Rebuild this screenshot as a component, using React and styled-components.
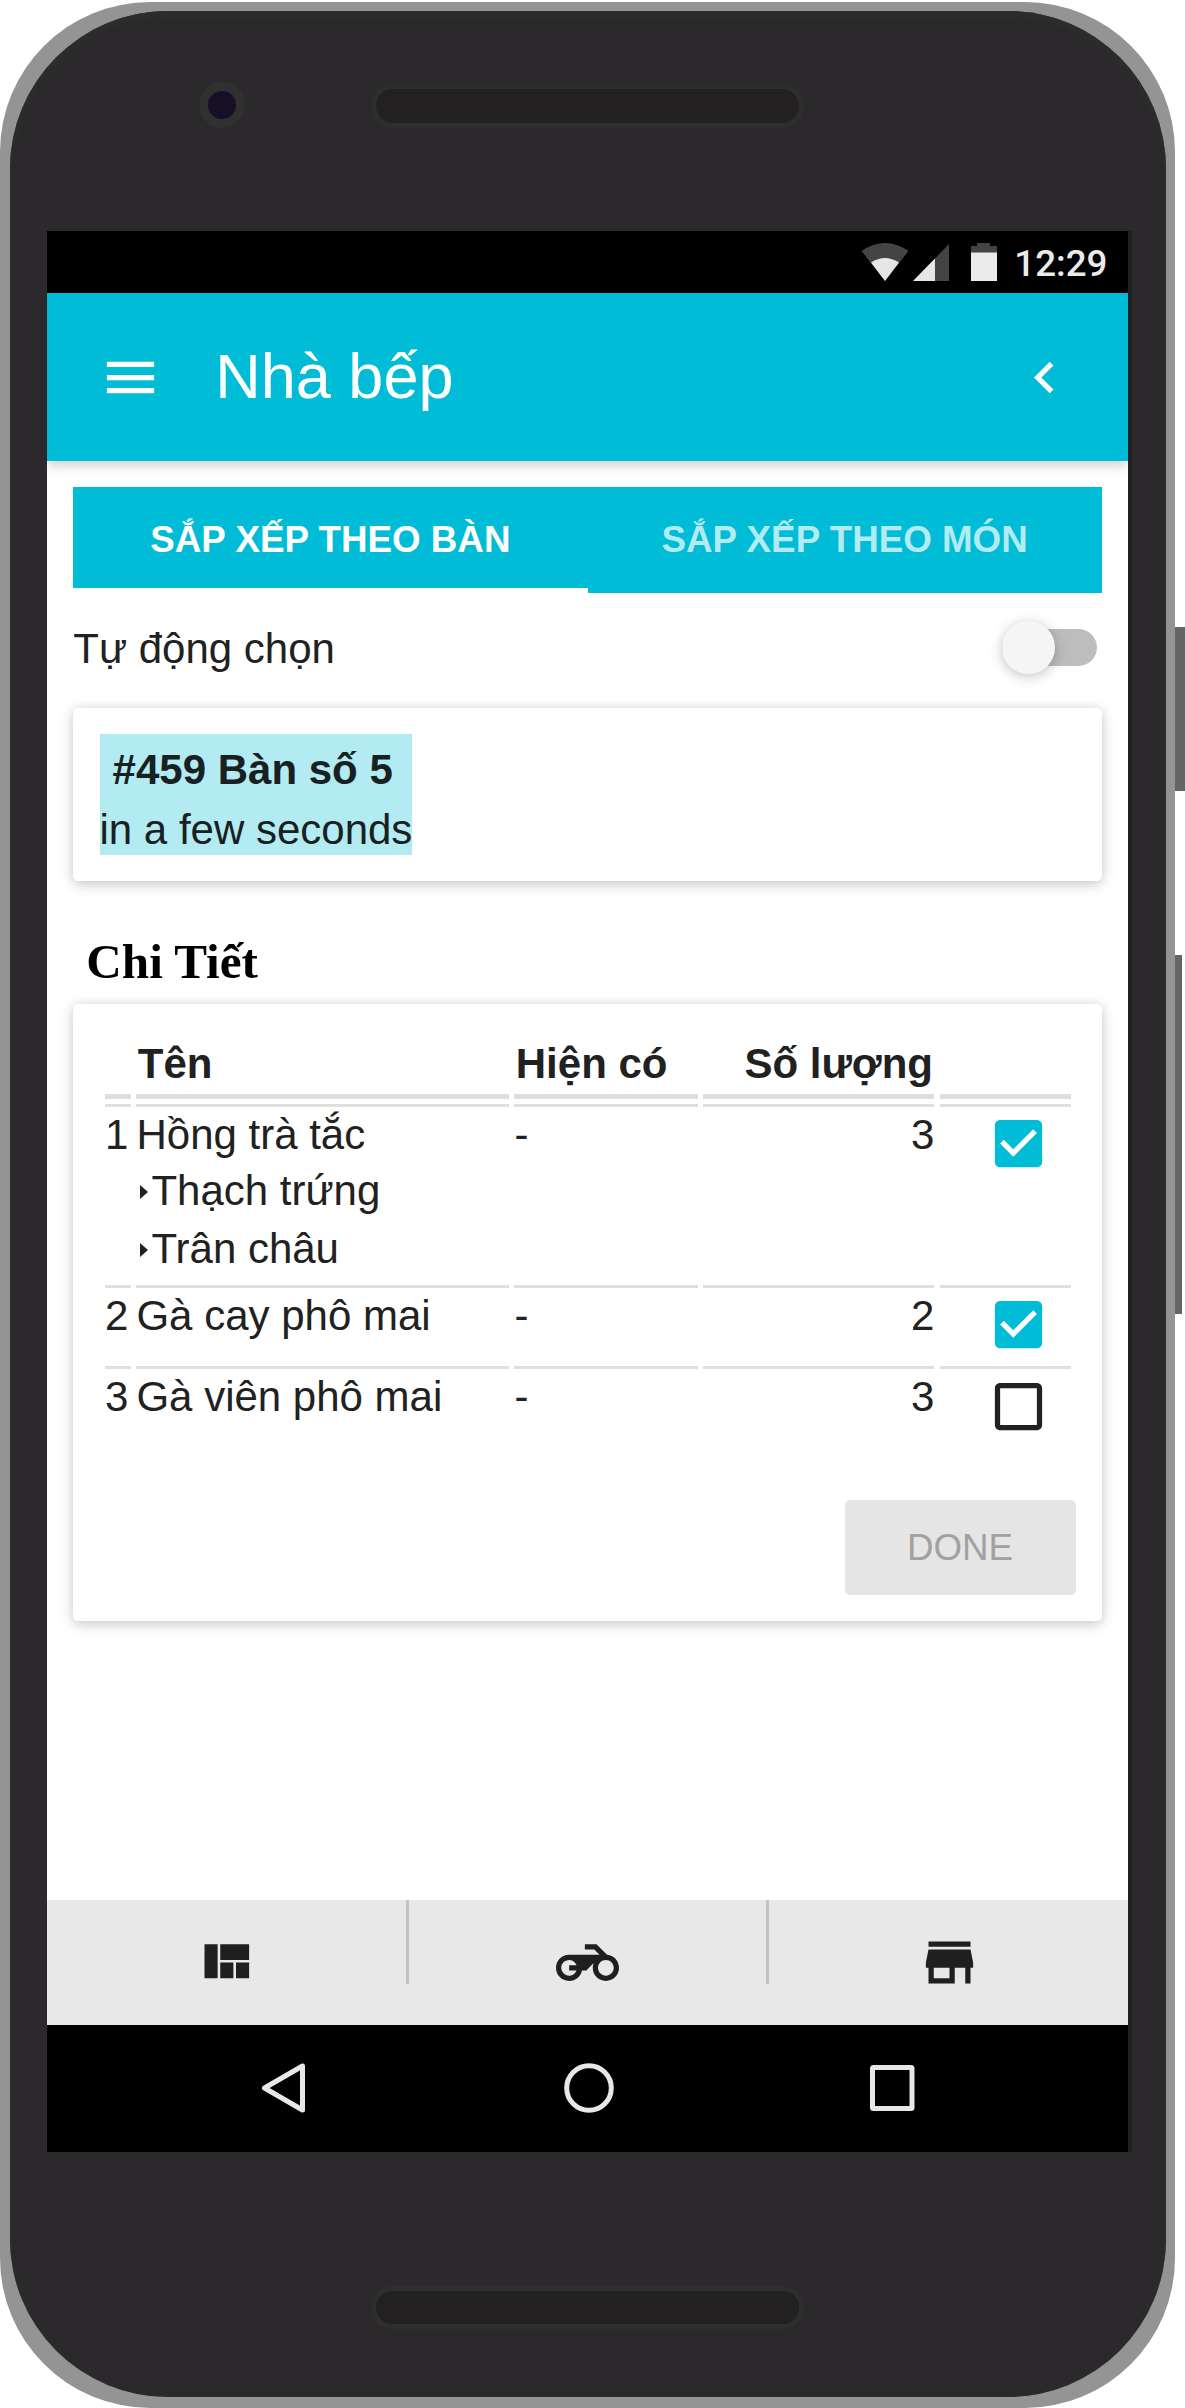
import React from "react";
import styled, { createGlobalStyle } from "styled-components";

const cyan = "#00bcd7";
const ink = "#212121";
const depth = "0 2.6px 15.75px rgba(0,0,0,.12), 0 2.6px 10.5px rgba(0,0,0,.12)";

const GlobalStyle = createGlobalStyle`
  * { box-sizing: border-box; }
  body {
    margin: 0;
    background: #fff;
    color: ${ink};
    font-family: "Liberation Sans", Arial, sans-serif;
    overflow: hidden;
  }
`;

/* ---------- device ---------- */

const Stage = styled.div`
  display: flex;
  width: 1185px;
  height: 2408px;
  padding-top: 1.5px;
`;

const Shell = styled.div`
  flex: none;
  width: 1175px;
  height: 2406.5px;
  padding: 9px 9px 11.5px 10px;
  border-radius: 150px;
  background: #949494;
`;

const Face = styled.div`
  display: flex;
  flex-direction: column;
  width: 1156px;
  height: 2386px;
  border-radius: 158px;
  background: #2c292c;
  box-shadow: inset 0 4px 5px 3px #2c2d2c;
`;

const TopBezel = styled.div`
  display: flex;
  flex: none;
  align-items: flex-start;
  height: 220.5px;
  padding: 71.5px 0 0 189px;
`;

const Camera = styled.div`
  width: 46px;
  height: 46px;
  border: 9.5px solid #2f302f;
  border-radius: 50%;
  background: #170f26;
`;

const Speaker = styled.div`
  width: 432.5px;
  height: ${(p) => p.$height}px;
  margin: ${(p) => p.$margin};
  border: 5.25px solid #2d2e2d;
  border-radius: 22px;
  background: #232021;
`;

const SideKeys = styled.div`
  display: flex;
  flex-direction: column;
  padding-top: 625px;
`;

const SideKey = styled.div`
  width: ${(p) => p.$width}px;
  height: ${(p) => p.$height}px;
  margin-bottom: 164px;
  background: #666465;
`;

const Screen = styled.div`
  display: flex;
  flex: none;
  flex-direction: column;
  width: 1085px;
  height: 1921px;
  margin-left: 37px;
  border-right: 4px solid #212021;
`;

/* ---------- android bars ---------- */

const StatusBar = styled.div`
  display: flex;
  flex: none;
  align-items: center;
  justify-content: flex-end;
  height: 62px;
  padding-right: 20.5px;
  background: #000;
`;

const StatusIcons = styled.svg`
  width: 138px;
  height: 40px;
  margin-right: 15px;
`;

const Clock = styled.span`
  color: #ebebeb;
  font: 500 36.75px/44px Roboto, sans-serif;
  margin-top: 4px;
`;

const NavBar = styled.div`
  display: flex;
  flex: 1;
  align-items: center;
  justify-content: space-between;
  padding: 0 208px 0 211px;
  background: #000;

  svg {
    width: 56px;
    height: 56px;
    fill: none;
    stroke: #e8e8e8;
    stroke-width: 5;
    stroke-linejoin: round;
  }
`;

/* ---------- app ---------- */

const Icon = styled.svg`
  flex: none;
  display: block;
  width: 63px;
  height: 63px;
  fill: ${(p) => p.$color || "#1f1f1f"};
`;

const AppBar = styled.header`
  display: flex;
  flex: none;
  align-items: center;
  height: 168px;
  padding: 0 51.7px 0 52.3px;
  background: ${cyan};
  box-shadow: ${depth};
  clip-path: inset(0 0 -40px 0);
`;

const Title = styled.h1`
  flex: 1;
  margin: 0 0 2px 53px;
  color: #fff;
  font-size: 63px;
  font-weight: 400;
  line-height: 76px;
`;

const Body = styled.main`
  flex: none;
  height: 1438.5px;
  padding: 26.25px;
  background: #fff;
`;

const Tabs = styled.div`
  display: flex;
  height: 105.25px;
  background: ${cyan};
`;

const Tab = styled.div`
  flex: 1;
  padding-top: 25.7px;
  border-bottom: 5.25px solid ${(p) => (p.$active ? "#fff" : "transparent")};
  color: ${(p) => (p.$active ? "#fff" : "#b2ebf2")};
  font-size: 36.75px;
  font-weight: 700;
  line-height: 53px;
  text-align: center;
`;

const SettingRow = styled.div`
  display: flex;
  align-items: center;
  justify-content: space-between;
  height: 115.2px;
  padding: 0 5px 5px 0;
  font-size: 42px;
  line-height: 50px;
`;

const SettingLabel = styled.span`
  margin-top: 2px;
`;

const Track = styled.div`
  display: flex;
  align-items: center;
  width: 94.5px;
  height: 36.75px;
  border-radius: 19px;
  background: #bdbdbd;
`;

const Thumb = styled.div`
  flex: none;
  width: 52.5px;
  height: 52.5px;
  border-radius: 50%;
  background: #f5f5f5;
  box-shadow: ${depth};
`;

const Card = styled.section`
  height: ${(p) => p.$height}px;
  padding: ${(p) => p.$padding};
  border-radius: 5.25px;
  background: #fff;
  box-shadow: ${depth};
`;

const Ticket = styled.div`
  display: inline-flex;
  flex-direction: column;
  align-items: center;
  gap: 9px;
  padding-top: 9.6px;
  background: #b2ebf2;
  color: #182021;
  font-size: 42px;
  line-height: 51px;
`;

const TicketName = styled.b`
  margin-right: 6.5px;
`;

const Heading = styled.h3`
  margin: 53.8px 0 14px 13.1px;
  color: #000;
  font: 700 49.14px/56px "Liberation Serif", "Times New Roman", serif;
`;

const Table = styled.div`
  display: grid;
  grid-template-columns: 26.2px 372.8px 183.6px 231px 131.4px;
  grid-template-rows: 63.4px 175.9px 76.1px 76.1px;
  gap: 5.25px;
  font-size: 42px;
  line-height: 55.5px;
`;

const Th = styled.div`
  border-bottom: 5px solid #dedede;
  padding: 1px 1.3px 0;
  font-weight: 700;
  line-height: 56px;
  text-align: ${(p) => p.$align || "left"};
  white-space: nowrap;
`;

const Td = styled.div`
  border-top: 3px solid #dfdfdf;
  text-align: ${(p) => p.$align || "left"};
  white-space: nowrap;
`;

const CheckCell = styled(Td)`
  padding: 5.25px 0 0 47.7px;
`;

const Extra = styled.div`
  display: flex;
  align-items: center;
  line-height: 58px;

  &::before {
    content: "";
    margin: 2px 3px 0 4px;
    border-left: 8px solid ${ink};
    border-top: 7.3px solid transparent;
    border-bottom: 7.3px solid transparent;
  }
`;

const Actions = styled.div`
  display: flex;
  justify-content: flex-end;
  margin-top: 57.7px;
`;

const DoneButton = styled.button`
  width: 231px;
  height: 94.5px;
  padding: 2px 0 0;
  border: 0;
  border-radius: 5.25px;
  background: #e5e5e5;
  color: #a1a1a1;
  font: 400 36.75px/44px "Liberation Sans", Arial, sans-serif;
`;

const Footer = styled.footer`
  display: grid;
  flex: none;
  grid-template-columns: 362.2px 359.5px 1fr;
  height: 125.25px;
  background: #e8e8e8;
`;

const FooterItem = styled.div`
  display: flex;
  align-items: center;
  justify-content: center;
  height: 84px;
  padding: 42px ${(p) => p.$right || 0}px 0 ${(p) => p.$left || 0}px;
  border-right: ${(p) => (p.$last ? 0 : 3)}px solid #c2c2c2;
`;

const paths = {
  menu: "M3 18h18v-2H3v2zm0-5h18v-2H3v2zm0-7v2h18V6H3z",
  back: "M15.41 7.41L14 6l-6 6 6 6 1.41-1.41L10.83 12z",
  checked:
    "M19 3H5c-1.11 0-2 .9-2 2v14c0 1.1.89 2 2 2h14c1.11 0 2-.9 2-2V5c0-1.1-.89-2-2-2zm-9 14l-5-5 1.41-1.41L10 14.17l7.59-7.59L19 8l-9 9z",
  unchecked:
    "M19 5v14H5V5h14m0-2H5c-1.1 0-2 .9-2 2v14c0 1.1.9 2 2 2h14c1.1 0 2-.9 2-2V5c0-1.1-.9-2-2-2z",
  quilt: "M10 18h5v-6h-5v6zm-6 0h5V5H4v13zm12 0h5v-6h-5v6zM10 5v6h11V5H10z",
  moto:
    "M19.44 9.03L15.41 5H11v2h3.59l2 2H5c-2.8 0-5 2.2-5 5s2.2 5 5 5c2.46 0 4.45-1.69 4.9-4h1.65l2.77-2.77c-.21.54-.32 1.14-.32 1.77 0 2.8 2.2 5 5 5s5-2.2 5-5c0-2.65-1.97-4.77-4.56-4.97zM7.82 15C7.4 16.15 6.28 17 5 17c-1.63 0-3-1.37-3-3s1.37-3 3-3c1.28 0 2.4.85 2.82 2H5v2h2.82zM19 17c-1.66 0-3-1.34-3-3s1.34-3 3-3 3 1.34 3 3-1.34 3-3 3z",
  store: "M20 4H4v2h16V4zm1 10v-2l-1-5H4l-1 5v2h1v6h10v-6h4v6h2v-6h1zm-9 4H6v-4h6v4z",
};

const Glyph = ({ name, color }) => (
  <Icon viewBox="0 0 24 24" $color={color}>
    <path d={paths[name]} />
  </Icon>
);

const items = [
  { name: "Hồng trà tắc", extras: ["Thạch trứng", "Trân châu"], stock: "-", amount: 3, done: true },
  { name: "Gà cay phô mai", extras: [], stock: "-", amount: 2, done: true },
  { name: "Gà viên phô mai", extras: [], stock: "-", amount: 3, done: false },
];

export default function App() {
  return (
    <>
      <GlobalStyle />
      <Stage>
        <Shell>
          <Face>
            <TopBezel>
              <Camera />
              <Speaker $height={44.5} $margin="1.5px 0 0 126px" />
            </TopBezel>
            <Screen>
              <StatusBar>
                <StatusIcons viewBox="860 242 138 40">
                  <path fill="#444" d="M860.5 251Q884 235 907.5 251L884 281Z" />
                  <path fill="#e6e6e6" d="M870 262.500Q884 253.500 898 262.500L884 281Z" />
                  <path fill="#444" d="M948 244V281H912Z" />
                  <path fill="#e6e6e6" d="M934 258.400V281H912Z" />
                  <path fill="#444" d="M976 243H989V246H996V253H970V246H976Z" />
                  <path fill="#ebebeb" d="M970 252.500H996V281H970Z" />
                </StatusIcons>
                <Clock>12:29</Clock>
              </StatusBar>
              <AppBar>
                <Glyph name="menu" color="#fff" />
                <Title>Nhà bếp</Title>
                <Glyph name="back" color="#fff" />
              </AppBar>
              <Body>
                <Tabs>
                  <Tab $active>SẮP XẾP THEO BÀN</Tab>
                  <Tab>SẮP XẾP THEO MÓN</Tab>
                </Tabs>
                <SettingRow>
                  <SettingLabel>Tự động chọn</SettingLabel>
                  <Track>
                    <Thumb />
                  </Track>
                </SettingRow>
                <Card $height={173} $padding="26.25px">
                  <Ticket>
                    <TicketName>#459 Bàn số 5</TicketName>
                    <span>in a few seconds</span>
                  </Ticket>
                </Card>
                <Heading>Chi Tiết</Heading>
                <Card $height={616.4} $padding="30.8px 26.25px 26.25px 31.75px">
                  <Table>
                    <Th />
                    <Th>Tên</Th>
                    <Th>Hiện có</Th>
                    <Th $align="right">Số lượng</Th>
                    <Th />
                    {items.map((item, i) => (
                      <React.Fragment key={item.name}>
                        <Td>{i + 1}</Td>
                        <Td>
                          {item.name}
                          {item.extras.map((extra) => (
                            <Extra key={extra}>{extra}</Extra>
                          ))}
                        </Td>
                        <Td>{item.stock}</Td>
                        <Td $align="right">{item.amount}</Td>
                        <CheckCell>
                          <Glyph
                            name={item.done ? "checked" : "unchecked"}
                            color={item.done ? cyan : ink}
                          />
                        </CheckCell>
                      </React.Fragment>
                    ))}
                  </Table>
                  <Actions>
                    <DoneButton disabled>DONE</DoneButton>
                  </Actions>
                </Card>
              </Body>
              <Footer>
                <FooterItem $right={3}>
                  <Glyph name="quilt" />
                </FooterItem>
                <FooterItem>
                  <Glyph name="moto" />
                </FooterItem>
                <FooterItem $last $left={3}>
                  <Glyph name="store" />
                </FooterItem>
              </Footer>
              <NavBar>
                <svg viewBox="0 0 56 56">
                  <path d="M44.500 6V50L6.500 28Z" />
                </svg>
                <svg viewBox="0 0 56 56">
                  <circle cx="28" cy="28" r="22.300" />
                </svg>
                <svg viewBox="0 0 56 56">
                  <rect x="8.500" y="7.500" width="39.500" height="41" rx="1" />
                </svg>
              </NavBar>
            </Screen>
            <Speaker $height={43.5} $margin="133.700px 0 0 361px" />
          </Face>
        </Shell>
        <SideKeys>
          <SideKey $width={10} $height={164} />
          <SideKey $width={7} $height={359.5} />
        </SideKeys>
      </Stage>
    </>
  );
}
